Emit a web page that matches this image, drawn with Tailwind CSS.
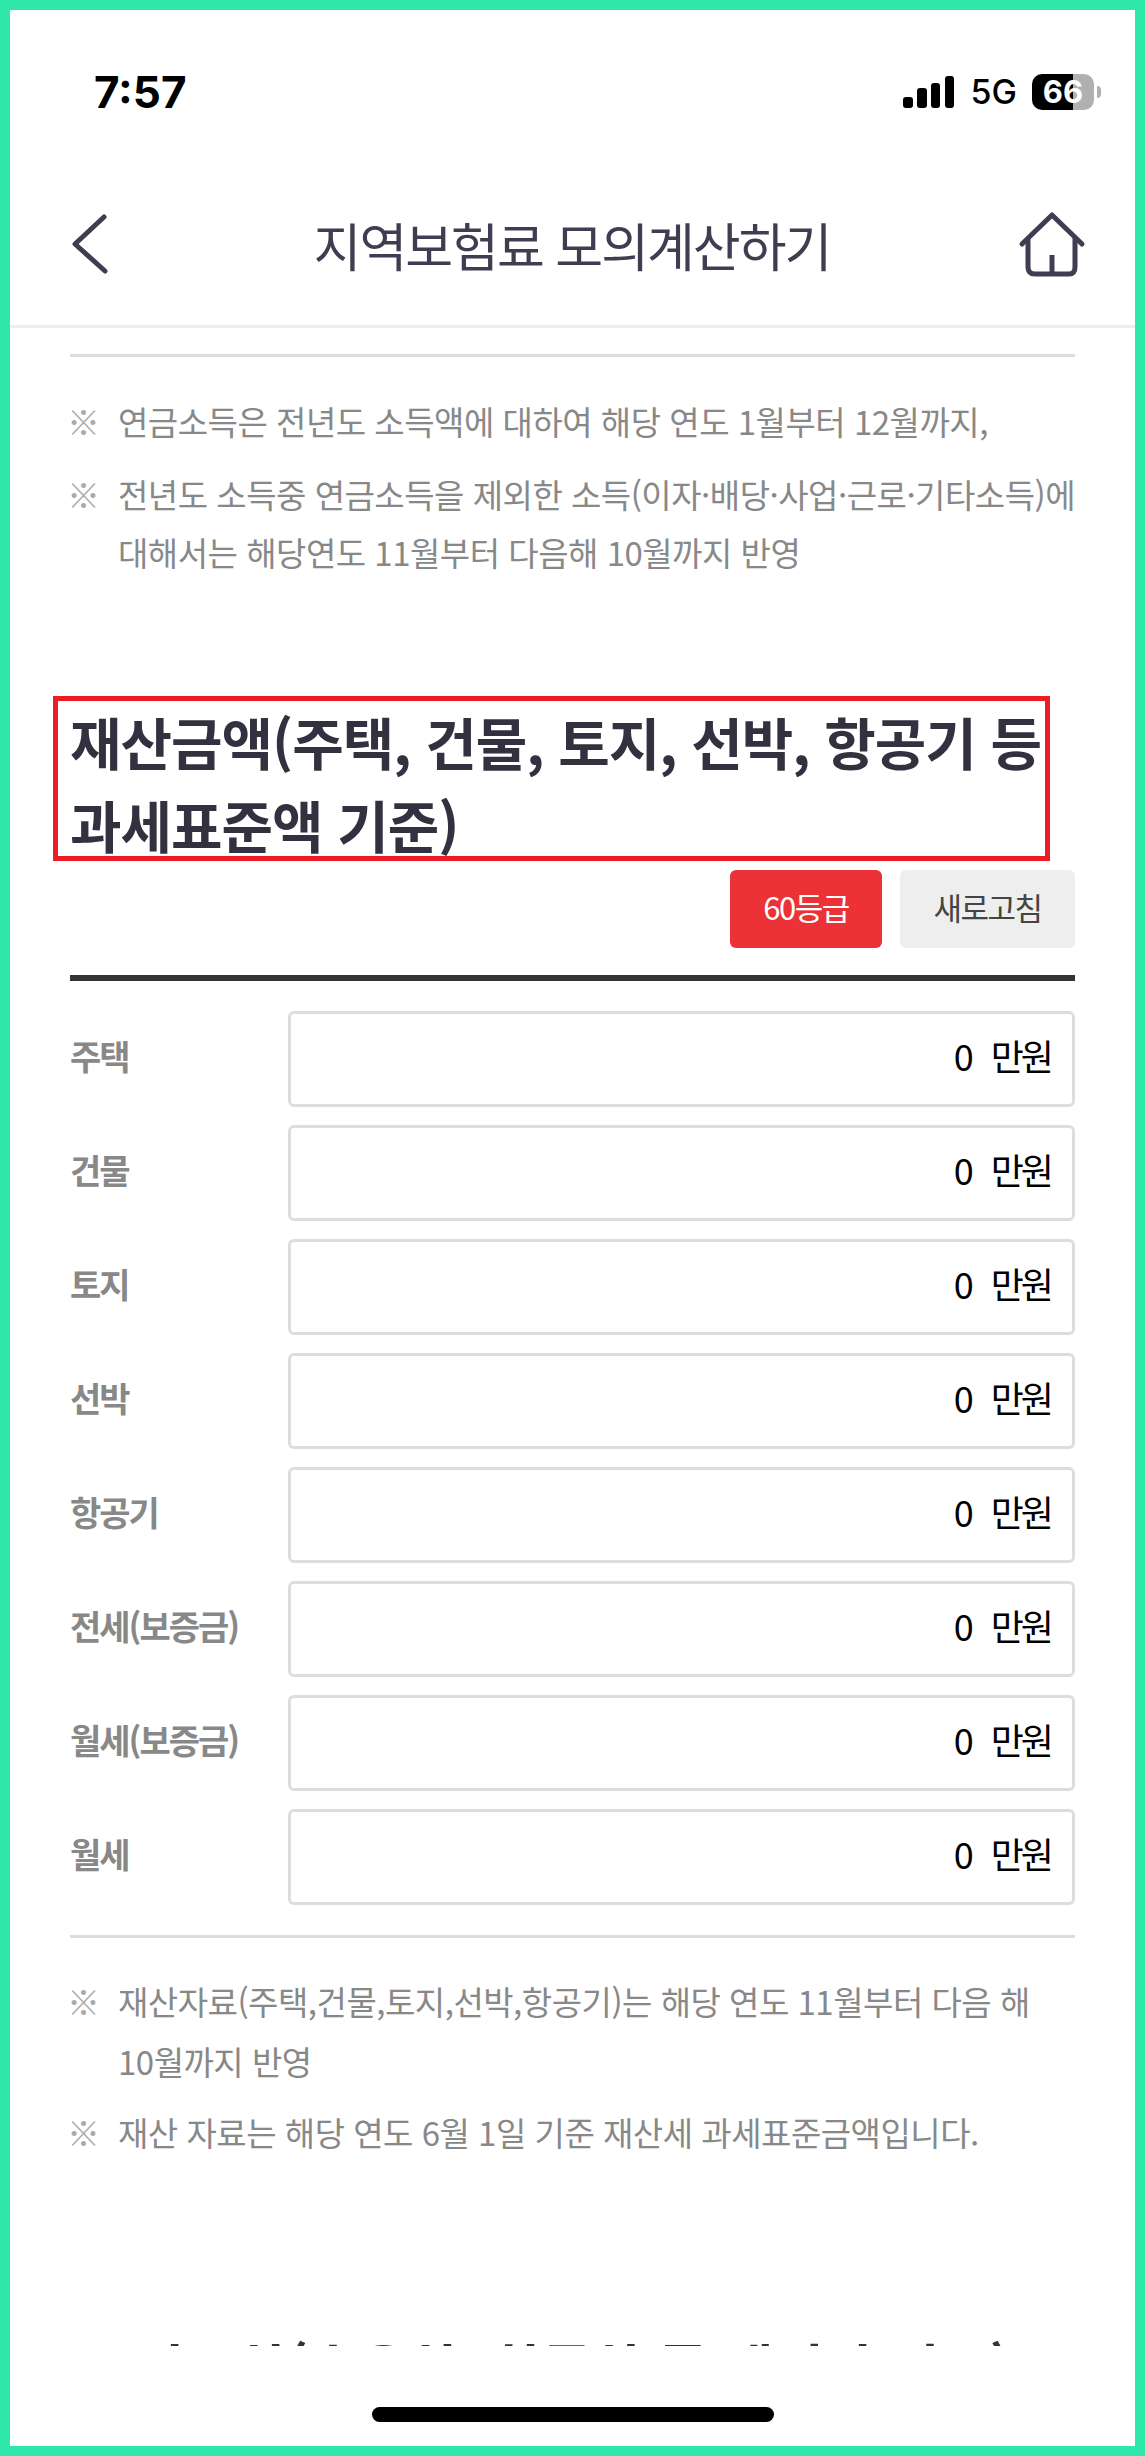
<!DOCTYPE html>
<html lang="ko">
<head>
    <meta charset="UTF-8">
    <meta name="viewport" content="width=device-width, initial-scale=1.0">
    <title>지역보험료 모의계산하기</title>
    <script src="https://cdn.jsdelivr.net/npm/@tailwindcss/browser@4"></script>
</head>

<body class="bg-white font-['Noto_Sans_CJK_KR','Noto_Sans',sans-serif]">
    <div class="w-[1145px] h-[2456px] border-[10px] border-[#2ee8ab] bg-white flex flex-col overflow-hidden">

        <!-- Status bar -->
        <div class="h-[155px] shrink-0 pt-[9px] pl-[84px] pr-[34px] flex items-center justify-between font-['Inter',sans-serif] text-black">
            <span class="text-[44px] font-bold leading-none">7:57</span>
            <div class="flex items-center">
                <svg width="51" height="32" viewBox="0 0 51 32" fill="#000">
                    <rect x="0" y="21" width="10" height="11" rx="3"/>
                    <rect x="14" y="12" width="10" height="20" rx="3"/>
                    <rect x="28" y="7" width="9" height="25" rx="3"/>
                    <rect x="42" y="0" width="9" height="32" rx="3"/>
                </svg>
                <span class="ml-[17px] text-[34px] font-medium leading-none">5G</span>
                <div class="ml-[15px] w-[62px] h-[36px] rounded-[10px] bg-[linear-gradient(90deg,#000_66%,#b0b0b0_66%)] text-white text-[31px] font-bold leading-[36px] text-center">66</div>
                <div class="ml-[3px] w-[4px] h-[12px] rounded-r-full bg-[#b0b0b0]"></div>
            </div>
        </div>

        <!-- Nav -->
        <div class="h-[163px] shrink-0 border-b-[3px] border-[#eeeeee] flex items-center justify-between pl-[50px] pr-[45px] text-[#3f3d50]">
            <svg width="60" height="70" viewBox="0 0 60 70" fill="none" stroke="#3f3d50" stroke-width="5" stroke-linecap="round" stroke-linejoin="round">
                <path d="M44 7 L15 34 L45 61"/>
            </svg>
            <h1 class="ml-[9px] text-[52px] font-normal leading-none tracking-[-2px]">지역보험료 모의계산하기</h1>
            <svg width="75" height="72" viewBox="0 0 75 72" fill="none" stroke="#3f3d50" stroke-width="5" stroke-linecap="round" stroke-linejoin="round">
                <path d="M7 35 L37 6 L67 35"/>
                <path d="M13 30 V58 Q13 65 20 65 H54 Q60 65 60 58 V30"/>
                <path d="M37 46 V65" stroke-linecap="butt"/>
            </svg>
        </div>

        <!-- Content -->
        <div class="h-[2018px] shrink-0 overflow-hidden px-[60px] pt-[26px]">
            <div class="h-[3px] bg-[#dddddd]"></div>

            <ul class="mt-[35px] flex flex-col gap-[15px] text-[33px] tracking-[-0.5px] leading-[58px] text-[#888888]">
                <li class="flex">
                    <span class="-ml-[3px] w-[51px] shrink-0 font-bold text-[#aaaaaa]">※</span>
                    <span class="whitespace-nowrap">연금소득은 전년도 소득액에 대하여 해당 연도 1월부터 12월까지,</span>
                </li>
                <li class="flex">
                    <span class="-ml-[3px] w-[51px] shrink-0 font-bold text-[#aaaaaa]">※</span>
                    <span class="whitespace-nowrap">전년도 소득중 연금소득을 제외한 소득(이자·배당·사업·근로·기타소득)에<br>대해서는 해당연도 11월부터 다음해 10월까지 반영</span>
                </li>
            </ul>

            <!-- Section heading, red box is an annotation drawn over it -->
            <div class="relative mt-[118px]">
                <h2 class="text-[56px] font-bold tracking-[-1px] leading-[83px] text-[#33313f]">재산금액(주택, 건물, 토지, 선박, 항공기 등<br>과세표준액 기준)</h2>
                <div class="absolute left-[-17px] top-[-3px] w-[997px] h-[165px] border-[5px] border-[#ee1c25]"></div>
            </div>

            <div class="mt-[5px] flex justify-end gap-[18px] text-[31px] tracking-[-1.5px]">
                <button class="w-[152px] h-[78px] pb-[3px] rounded-[6px] bg-[#ec3237] text-white">60등급</button>
                <button class="w-[175px] h-[78px] pb-[3px] rounded-[6px] bg-[#eeeeee] text-[#444444]">새로고침</button>
            </div>

            <div class="mt-[27px] h-[6px] bg-[#333333]"></div>

            <!-- Property inputs -->
            <div class="mt-[30px] flex flex-col gap-[18px]">
                <div class="flex items-center">
                    <label class="w-[218px] shrink-0 pb-[8px] text-[34px] font-bold tracking-[-2px] text-[#888888]">주택</label>
                    <div class="flex-1 h-[96px] border-[3px] border-[#dddddd] rounded-[6px] flex items-center pb-[8px] pr-[21px] text-[36px] text-black">
                        <input value="0" class="w-full text-right outline-none">
                        <span class="ml-[17px] shrink-0 tracking-[-3px]">만원</span>
                    </div>
                </div>
                <div class="flex items-center">
                    <label class="w-[218px] shrink-0 pb-[8px] text-[34px] font-bold tracking-[-2px] text-[#888888]">건물</label>
                    <div class="flex-1 h-[96px] border-[3px] border-[#dddddd] rounded-[6px] flex items-center pb-[8px] pr-[21px] text-[36px] text-black">
                        <input value="0" class="w-full text-right outline-none">
                        <span class="ml-[17px] shrink-0 tracking-[-3px]">만원</span>
                    </div>
                </div>
                <div class="flex items-center">
                    <label class="w-[218px] shrink-0 pb-[8px] text-[34px] font-bold tracking-[-2px] text-[#888888]">토지</label>
                    <div class="flex-1 h-[96px] border-[3px] border-[#dddddd] rounded-[6px] flex items-center pb-[8px] pr-[21px] text-[36px] text-black">
                        <input value="0" class="w-full text-right outline-none">
                        <span class="ml-[17px] shrink-0 tracking-[-3px]">만원</span>
                    </div>
                </div>
                <div class="flex items-center">
                    <label class="w-[218px] shrink-0 pb-[8px] text-[34px] font-bold tracking-[-2px] text-[#888888]">선박</label>
                    <div class="flex-1 h-[96px] border-[3px] border-[#dddddd] rounded-[6px] flex items-center pb-[8px] pr-[21px] text-[36px] text-black">
                        <input value="0" class="w-full text-right outline-none">
                        <span class="ml-[17px] shrink-0 tracking-[-3px]">만원</span>
                    </div>
                </div>
                <div class="flex items-center">
                    <label class="w-[218px] shrink-0 pb-[8px] text-[34px] font-bold tracking-[-2px] text-[#888888]">항공기</label>
                    <div class="flex-1 h-[96px] border-[3px] border-[#dddddd] rounded-[6px] flex items-center pb-[8px] pr-[21px] text-[36px] text-black">
                        <input value="0" class="w-full text-right outline-none">
                        <span class="ml-[17px] shrink-0 tracking-[-3px]">만원</span>
                    </div>
                </div>
                <div class="flex items-center">
                    <label class="w-[218px] shrink-0 pb-[8px] text-[34px] font-bold tracking-[-2px] text-[#888888]">전세(보증금)</label>
                    <div class="flex-1 h-[96px] border-[3px] border-[#dddddd] rounded-[6px] flex items-center pb-[8px] pr-[21px] text-[36px] text-black">
                        <input value="0" class="w-full text-right outline-none">
                        <span class="ml-[17px] shrink-0 tracking-[-3px]">만원</span>
                    </div>
                </div>
                <div class="flex items-center">
                    <label class="w-[218px] shrink-0 pb-[8px] text-[34px] font-bold tracking-[-2px] text-[#888888]">월세(보증금)</label>
                    <div class="flex-1 h-[96px] border-[3px] border-[#dddddd] rounded-[6px] flex items-center pb-[8px] pr-[21px] text-[36px] text-black">
                        <input value="0" class="w-full text-right outline-none">
                        <span class="ml-[17px] shrink-0 tracking-[-3px]">만원</span>
                    </div>
                </div>
                <div class="flex items-center">
                    <label class="w-[218px] shrink-0 pb-[8px] text-[34px] font-bold tracking-[-2px] text-[#888888]">월세</label>
                    <div class="flex-1 h-[96px] border-[3px] border-[#dddddd] rounded-[6px] flex items-center pb-[8px] pr-[21px] text-[36px] text-black">
                        <input value="0" class="w-full text-right outline-none">
                        <span class="ml-[17px] shrink-0 tracking-[-3px]">만원</span>
                    </div>
                </div>
            </div>

            <div class="mt-[30px] h-[3px] bg-[#dddddd]"></div>

            <ul class="mt-[33px] flex flex-col gap-[11px] text-[33px] tracking-[-0.5px] leading-[60px] text-[#888888]">
                <li class="flex">
                    <span class="-ml-[3px] w-[51px] shrink-0 font-bold text-[#aaaaaa]">※</span>
                    <span class="whitespace-nowrap">재산자료(주택,건물,토지,선박,항공기)는 해당 연도 11월부터 다음 해<br>10월까지 반영</span>
                </li>
                <li class="flex">
                    <span class="-ml-[3px] w-[51px] shrink-0 font-bold text-[#aaaaaa]">※</span>
                    <span class="whitespace-nowrap">재산 자료는 해당 연도 6월 1일 기준 재산세 과세표준금액입니다.</span>
                </li>
            </ul>

            <!-- Next section, cut off by the bottom bar -->
            <h2 class="mt-[163px] text-center text-[56px] font-bold tracking-[-1px] leading-[83px] text-[#33313f]">자동차(승용차, 화물차 등 배기량 기준)</h2>
        </div>

        <!-- Home indicator -->
        <div class="flex-1 pt-[61px]">
            <div class="mx-auto w-[402px] h-[15px] rounded-full bg-black"></div>
        </div>
    </div>
</body>
</html>
